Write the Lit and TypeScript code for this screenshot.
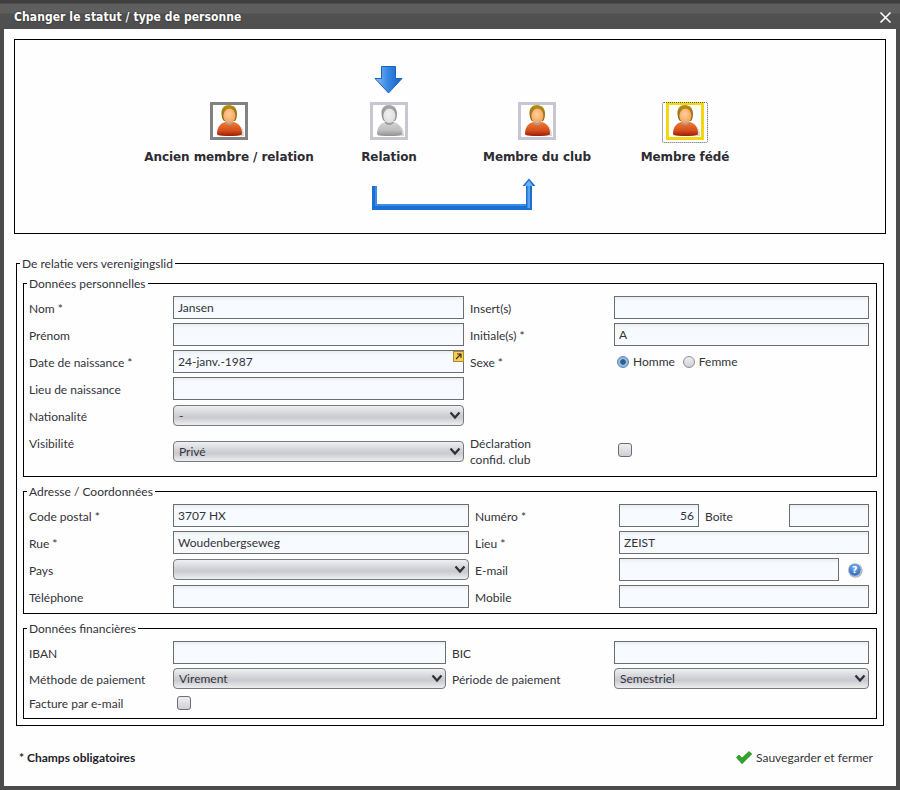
import { LitElement, html, css, svg } from "lit";
import { customElement } from "lit/decorators.js";

const defs = svg`
  <defs>
    <linearGradient id="bodyC" x1="0" y1="0" x2="0" y2="1"><stop offset="0" stop-color="#f27a32"/><stop offset=".6" stop-color="#d4501c"/><stop offset="1" stop-color="#9c1c08"/></linearGradient>
    <linearGradient id="bodyG" x1="0" y1="0" x2="0" y2="1"><stop offset="0" stop-color="#d6d6d6"/><stop offset=".6" stop-color="#bdbdbd"/><stop offset="1" stop-color="#8f8f8f"/></linearGradient>
    <radialGradient id="faceC" cx=".45" cy=".4" r=".7"><stop offset="0" stop-color="#ffd09a"/><stop offset="1" stop-color="#f59a52"/></radialGradient>
    <radialGradient id="faceG" cx=".45" cy=".4" r=".7"><stop offset="0" stop-color="#f2f2f2"/><stop offset="1" stop-color="#d8d8d8"/></radialGradient>
    <linearGradient id="hairC" x1="0" y1="0" x2="0" y2="1"><stop offset="0" stop-color="#b98f12"/><stop offset="1" stop-color="#7f6010"/></linearGradient>
    <linearGradient id="hairG" x1="0" y1="0" x2="0" y2="1"><stop offset="0" stop-color="#a6a6a6"/><stop offset="1" stop-color="#8c8c8c"/></linearGradient>
    <linearGradient id="blueV" x1="0" y1="0" x2="1" y2="0"><stop offset="0" stop-color="#8cc0f4"/><stop offset=".45" stop-color="#3a8ae4"/><stop offset="1" stop-color="#1560c4"/></linearGradient>
  </defs>`;

function person(gray: boolean) {
  const s = gray ? "G" : "C";
  return html`<svg class="person" width="32" height="32" viewBox="0 0 32 32">
    ${defs}
    <path d="M5 31 C5 23 9 20 14 19 L22 19 C28 20 31 24 31 31 Z" fill="#000" opacity=".16"/>
    <path d="M4 29.5 C4 22 7 18.5 12 17 L21 17 C26 18.5 29 22 29 29.5 C24 31.5 9 31.5 4 29.5 Z" fill="url(#body${s})"/>
    <path d="M11.5 17 C13 21 19.5 21 21 17 L18 15 L14 15 Z" fill="${gray ? "#9c9c9c" : "#a8a098"}"/>
    <path d="M8.6 10 C7.6 3 11.5 0 16 0 C21 0 24.5 3.5 24 10 C23.8 13 23 15 22 16 L11 16 C9.4 14.5 8.9 12 8.6 10 Z" fill="url(#hair${s})"/>
    <ellipse cx="16.4" cy="10.8" rx="6.1" ry="7.3" fill="url(#face${s})"/>
  </svg>`;
}

@customElement("app-root")
export class AppRoot extends LitElement {
  static styles = css`
    :host { display: block; width: 900px; height: 790px; font-family: Lato, "Open Sans", sans-serif; font-size: 12px; color: #33333a; }
    * { box-sizing: border-box; }
    .frame { width: 900px; height: 790px; display: flex; flex-direction: column; background: #4c4c4c; }
    .title { height: 29px; flex: none; display: flex; align-items: center; justify-content: space-between; padding: 5px 8px 0 14px;
      background: linear-gradient(#3e3e3e 0, #3e3e3e 3px, #5e5e5e 4px, #5e5e5e 13px, #515151 14px, #4f4f4f 100%);
      color: #fff; font: bold 12px "DejaVu Sans Condensed", "DejaVu Sans", sans-serif; font-stretch: condensed; letter-spacing: 0.08px; text-shadow: 0 0 2px #222; }
    .close { display: block; }
    .body { flex: 1; margin: 0 4px 4px; background: #fefefe; padding: 10px; display: flex; flex-direction: column; }

    .steps { height: 195px; border: 1px solid #000; padding: 26px 0 0 124px; display: grid;
      grid-template-columns: 180px 140px 156px 140px; grid-template-rows: 36px 38px 38px auto; flex: none; }
    .down { grid-column: 2; grid-row: 1; justify-self: center; display: block; margin-right: 2px; }
    .cell { grid-row: 2; justify-self: center; position: relative; }
    .box { display: flex; width: 38px; height: 38px; border: 3px solid #c6c7d0; background: #fff; align-items: center; justify-content: center; }
    .box.dark { border-color: #828282; }
    .box.gold { border-color: #f2d80c; }
    .focus { position: absolute; left: -4px; top: 0; bottom: -3px; width: 46px; border: 1px dotted #555; border-radius: 2px; }
    .person { display: block; }
    .name { grid-row: 3; justify-self: center; align-self: start; padding-top: 9px; font: bold 12px/16px "DejaVu Sans", sans-serif; letter-spacing: -0.08px; white-space: nowrap; color: #2c2c33; }
    .route { grid-row: 4; grid-column: 1 / -1; margin: 0 0 0 233px; display: block; }

    fieldset { margin: 0; padding: 0; border: 1px solid #000; min-width: 0; }
    legend { margin-left: 3px; padding: 0 2px; line-height: 18px; height: 16px; white-space: nowrap; }
    .outer { margin: 21px 2px 0; padding: 0 6px 6px; flex: none; }
    .outer > legend { margin-left: -3px; }
    .outer > fieldset { margin-top: 6px; }
    .outer > fieldset:first-of-type { margin-top: 4px; }
    .grid { display: grid; padding: 5px 7px 5px 5px; row-gap: 4px; align-items: center; }
    .g1 { grid-template-columns: 144px 291px 150px 255px; grid-template-rows: 23px 23px 23px 23px 23px 37px; padding-bottom: 8px; }
    .g2 { grid-template-columns: 144px 296px 150px 250px; grid-auto-rows: 23px; }
    .g3 { grid-template-columns: 144px 273px 168px 255px; grid-template-rows: 23px 21px 20px; padding-bottom: 5px; }
    .lab { line-height: 16px; padding-top: 2px; white-space: nowrap; }
    .lab.r { padding-left: 6px; }
    .lab.top { align-self: start; padding-top: 5px; }
    .lab.two { padding-top: 0; align-self: end; }

    input[type="text"] { display: block; width: 100%; height: 23px; padding: 0 4px; border: 1px solid #6c6f72; border-radius: 0; outline: none;
      font: inherit; color: inherit; background: linear-gradient(#e9eef3 0, #f6f9fd 4px, #f7fafe 100%); }
    input.num { text-align: right; }
    .rel { position: relative; display: block; }
    .sel { position: relative; display: block; height: 21px; }
    .sel.low { align-self: end; margin-bottom: 6px; }
    select { appearance: none; -webkit-appearance: none; display: block; width: 100%; height: 21px; padding: 0 20px 0 5px; border: 1px solid #77797c; border-radius: 4px; outline: none;
      font: inherit; color: inherit; background: linear-gradient(#eff0f2 0, #d3d5d9 40%, #c8cacf 60%, #eceef0 100%); }
    .chev { position: absolute; right: 3px; top: 6px; pointer-events: none; display: block; }
    .cal { position: absolute; right: 0; top: 1px; display: block; }
    .pair { display: flex; align-items: center; }
    .pair .n { width: 80px; flex: none; }
    .pair .boite { flex: 1; padding: 2px 0 0 6px; line-height: 16px; }
    .mail { display: flex; align-items: center; }
    .mail input { width: 220px; flex: none; }
    .mail svg { margin-left: 8px; display: block; flex: none; }
    input[type="checkbox"], input[type="radio"] { appearance: none; -webkit-appearance: none; margin: 0; display: block; flex: none; background: linear-gradient(#eeeef2, #cfd0d6); }
    input[type="checkbox"] { width: 14px; height: 14px; border: 1px solid #6e6e72; border-radius: 3px; }
    .cb1 { margin-left: 4px !important; }
    .radios { display: flex; align-items: center; padding-left: 3px; margin-top: 1px; line-height: 16px; }
    input[type="radio"] { width: 12px; height: 12px; border: 1px solid #8d8f94; border-radius: 50%; }
    input[type="radio"]:checked { border-color: #5a88b4; background: radial-gradient(circle, #2e5f90 0, #2e5f90 2.4px, #9cc0e2 3.2px, #7ea8d0 100%); }
    .radios label { margin: 0 8px 0 4px; }

    .foot { display: flex; justify-content: space-between; align-items: center; padding: 24px 13px 0 5px; }
    .req { font-weight: 700; color: #22222a; }
    .save { display: flex; align-items: center; gap: 4px; }
  `;

  private chev() {
    return html`<svg class="chev" width="12" height="9" viewBox="0 0 12 9"><path d="M1.5 1.5 L6 6.5 L10.5 1.5" fill="none" stroke="#2e3238" stroke-width="2.2"/></svg>`;
  }
  private sel(v: string, low = false) {
    return html`<span class="sel ${low ? "low" : ""}"><select><option>${v}</option></select>${this.chev()}</span>`;
  }
  private inp(v = "", cls = "") {
    return html`<input type="text" class=${cls} value=${v} />`;
  }

  render() {
    return html`
      <div class="frame">
        <div class="title"><span>Changer le statut / type de personne</span>
          <svg class="close" width="13" height="13" viewBox="0 0 13 13"><path d="M1.5 1.5 L11.5 11.5 M11.5 1.5 L1.5 11.5" stroke="#fff" stroke-width="1.6" fill="none"/></svg>
        </div>
        <div class="body">
          <div class="steps">
            <svg class="down" width="29" height="28" viewBox="0 0 29 28">
              ${defs}
              <path d="M7.5 .5 H21.5 V12.5 H28 L14.5 27 L1 12.5 H7.5 Z" fill="url(#blueV)" stroke="#1b62c0" stroke-width="1"/>
            </svg>
            <div class="cell"><div class="box dark">${person(false)}</div></div>
            <div class="cell"><div class="box">${person(true)}</div></div>
            <div class="cell"><div class="box">${person(false)}</div></div>
            <div class="cell"><div class="focus"></div><div class="box gold">${person(false)}</div></div>
            <div class="name">Ancien membre / relation</div>
            <div class="name">Relation</div>
            <div class="name">Membre du club</div>
            <div class="name">Membre fédé</div>
            <svg class="route" width="164" height="33" viewBox="0 0 164 33">
              ${defs}
              <path d="M0 8 H5 V26 H154 V8 H150.5 L157 0.5 L163.5 8 H160 V32 H0 Z" fill="#1c6ed2"/>
              <path d="M5 26 H154 V28 H3 V8 H5 Z" fill="#3b8ce6"/>
              <path d="M155.5 8 H158 V30 H155.5 Z" fill="#5aa2ee"/>
              <path d="M152.5 8 L157 2.5 L161 8 Z" fill="#6fb0f0"/>
            </svg>
          </div>

          <fieldset class="outer">
            <legend>De relatie vers verenigingslid</legend>
            <fieldset>
              <legend>Données personnelles</legend>
              <div class="grid g1">
                <div class="lab">Nom *</div>${this.inp("Jansen")}
                <div class="lab r">Insert(s)</div>${this.inp()}
                <div class="lab">Prénom</div>${this.inp()}
                <div class="lab r">Initiale(s) *</div>${this.inp("A")}
                <div class="lab">Date de naissance *</div>
                <span class="rel">${this.inp("24-janv.-1987")}
                  <svg class="cal" width="11" height="11" viewBox="0 0 11 11"><rect x=".5" y=".5" width="10" height="10" fill="#f6cf56" stroke="#b08a30"/><path d="M3 8 L7.5 3.5 M4 3 H8 V7" fill="none" stroke="#3a2c10" stroke-width="1.1"/></svg>
                </span>
                <div class="lab r">Sexe *</div>
                <div class="radios"><input type="radio" name="sx" checked /><label>Homme</label><input type="radio" name="sx" /><label>Femme</label></div>
                <div class="lab">Lieu de naissance</div>${this.inp()}
                <div></div><div></div>
                <div class="lab">Nationalité</div>${this.sel("-")}
                <div></div><div></div>
                <div class="lab top">Visibilité</div>${this.sel("Privé", true)}
                <div class="lab r two">Déclaration<br />confid. club</div>
                <div><input type="checkbox" class="cb1" /></div>
              </div>
            </fieldset>
            <fieldset>
              <legend>Adresse / Coordonnées</legend>
              <div class="grid g2">
                <div class="lab">Code postal *</div>${this.inp("3707 HX")}
                <div class="lab r">Numéro *</div>
                <div class="pair">${this.inp("56", "num n")}<span class="boite">Boîte</span>${this.inp("", "n")}</div>
                <div class="lab">Rue *</div>${this.inp("Woudenbergseweg")}
                <div class="lab r">Lieu *</div>${this.inp("ZEIST")}
                <div class="lab">Pays</div>${this.sel("")}
                <div class="lab r">E-mail</div>
                <div class="mail">${this.inp()}
                  <svg width="16" height="16" viewBox="0 0 16 16">
                    <defs><radialGradient id="hlp" cx=".5" cy=".3" r=".8"><stop offset="0" stop-color="#7fb2ee"/><stop offset="1" stop-color="#1d5cb4"/></radialGradient></defs>
                    <circle cx="8.4" cy="8.6" r="7.2" fill="#7a8490" opacity=".6"/>
                    <circle cx="7.8" cy="7.8" r="6.4" fill="url(#hlp)" stroke="#c8d8ea" stroke-width=".8"/>
                    <text x="7.8" y="11.2" text-anchor="middle" font-family="DejaVu Sans" font-weight="700" font-size="9.5" fill="#fff">?</text>
                  </svg>
                </div>
                <div class="lab">Téléphone</div>${this.inp()}
                <div class="lab r">Mobile</div>${this.inp()}
              </div>
            </fieldset>
            <fieldset>
              <legend>Données financières</legend>
              <div class="grid g3">
                <div class="lab">IBAN</div>${this.inp()}
                <div class="lab r">BIC</div>${this.inp()}
                <div class="lab">Méthode de paiement</div>${this.sel("Virement")}
                <div class="lab r">Période de paiement</div>${this.sel("Semestriel")}
                <div class="lab">Facture par e-mail</div>
                <div><input type="checkbox" class="cb1" /></div>
                <div></div><div></div>
              </div>
            </fieldset>
          </fieldset>

          <div class="foot">
            <div class="req">* Champs obligatoires</div>
            <div class="save">
              <svg width="16" height="13" viewBox="0 0 16 13"><path d="M.5 6.5 L3 4 L6 7 L13 .5 L15.8 3 L6 12.8 Z" fill="#2fa62a" stroke="#1a7a18" stroke-width=".6"/></svg>
              <span>Sauvegarder et fermer</span>
            </div>
          </div>
        </div>
      </div>
    `;
  }
}
